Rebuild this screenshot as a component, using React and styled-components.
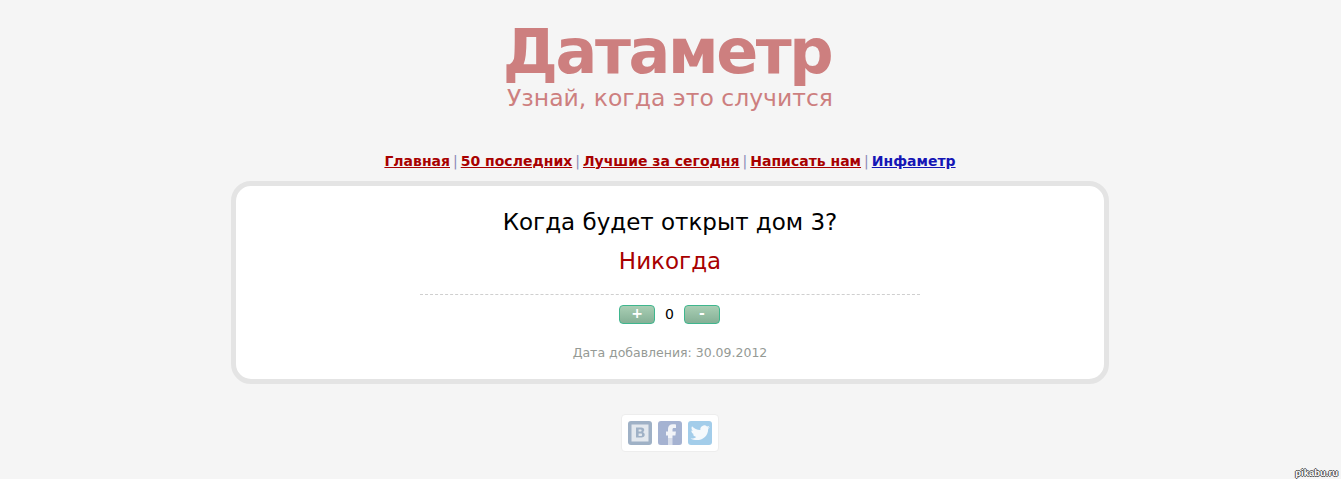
import React from "react";
import styled, { createGlobalStyle } from "styled-components";

const Global = createGlobalStyle`
  html, body {
    margin: 0;
    padding: 0;
    height: 100%;
    background: #f5f5f5;
    font-family: "DejaVu Sans", Verdana, sans-serif;
  }
`;

const Page = styled.div`
  position: relative;
  height: 479px;
  padding-right: 1px;
  overflow: hidden;
  display: flex;
  flex-direction: column;
  align-items: center;
`;

const Header = styled.header`
  display: flex;
  flex-direction: column;
  align-items: center;
  color: #cd7f7f;
  padding-top: 20px;
`;

const Title = styled.h1`
  margin: 0;
  padding-right: 6px;
  font-size: 62px;
  line-height: 64px;
  letter-spacing: -2.4px;
  font-weight: 700;
`;

const Slogan = styled.div`
  font-size: 23.5px;
  line-height: 28px;
`;

const Menu = styled.nav`
  margin-top: 39px;
  height: 20px;
  display: flex;
  align-items: center;
  font-size: 14px;
  color: #8a8ab8;
`;

const MenuLink = styled.a`
  color: ${(p) => (p.$blue ? "#1515b5" : "#a80000")};
  font-weight: 700;
  text-decoration: underline;
`;

const Sep = styled.span`
  margin: 0 3px;
`;

const Card = styled.main`
  box-sizing: border-box;
  width: 878px;
  height: 203px;
  margin-top: 10px;
  background: #fff;
  border: 5px solid #e4e4e4;
  border-radius: 20px;
  display: flex;
  flex-direction: column;
  align-items: center;
  padding-top: 21px;
`;

const Question = styled.div`
  font-size: 23px;
  line-height: 30px;
  color: #000;
`;

const Answer = styled.div`
  margin-top: 9px;
  font-size: 23px;
  line-height: 30px;
  color: #a80000;
`;

const Divider = styled.div`
  width: 500px;
  margin-top: 18px;
  border-top: 1px dashed #cfcfcf;
`;

const Votes = styled.div`
  margin-top: 10px;
  margin-right: 1px;
  display: flex;
  align-items: center;
  gap: 10px;
  font-size: 14px;
  line-height: 17px;
  color: #000;
`;

const VoteButton = styled.button`
  box-sizing: border-box;
  width: 36px;
  height: 19px;
  padding: 0 0 2px;
  border: 1px solid #3fb68e;
  border-radius: 4px;
  background: linear-gradient(#a9ceb4, #85b096);
  color: #fff;
  font-family: inherit;
  font-size: 14px;
  font-weight: 700;
  line-height: 15px;
`;

const Count = styled.span`
  width: 9px;
  margin-top: -1px;
  text-align: center;
`;

const Added = styled.div`
  margin-top: 21px;
  font-size: 12.5px;
  line-height: 16px;
  color: #959a95;
`;

const Social = styled.div`
  box-sizing: border-box;
  margin-top: 30px;
  height: 38px;
  padding: 6px;
  display: flex;
  gap: 6px;
  background: #fff;
  border: 1px solid #ededed;
  border-radius: 4px;
`;

const SocialIcon = styled.svg`
  display: block;
  width: 24px;
  height: 24px;
`;

const Watermark = styled.span`
  position: absolute;
  right: 3px;
  bottom: 1px;
  font-family: "Liberation Sans", Arial, sans-serif;
  font-size: 9.5px;
  font-weight: 700;
  color: #fff;
  text-shadow: -1px 0 #555, 1px 0 #555, 0 -1px #555, 0 1px #555;
`;

const links = [
  { label: "Главная" },
  { label: "50 последних" },
  { label: "Лучшие за сегодня" },
  { label: "Написать нам" },
  { label: "Инфаметр", blue: true },
];

function Vk() {
  return (
    <SocialIcon viewBox="0 0 24 24">
      <rect width="24" height="24" rx="3" fill="#9fb1c6" />
      <rect x="3.5" y="3.5" width="17" height="17" fill="#e3e8ee" />
      <path
        d="M8 6.5h5.2c2 0 3 1 3 2.5 0 1-.5 1.8-1.4 2.2 1.2.3 1.9 1.2 1.9 2.5 0 1.8-1.3 2.8-3.4 2.8H8zm2.6 2v2h2c.6 0 1-.4 1-1s-.4-1-1-1zm0 4v2.500h2.300c.8 0 1.200-.5 1.200-1.250s-.4-1.250-1.200-1.250z"
        fill="#9fb1c6"
        fillRule="evenodd"
      />
    </SocialIcon>
  );
}

function Fb() {
  return (
    <SocialIcon viewBox="0 0 24 24">
      <rect width="24" height="24" rx="3" fill="#a5b3d2" />
      <path
        d="M10 24V14.500H8v-4h2V8c0-3 1.800-4.800 4.800-4.800 1.300 0 2.500.1 3.200.2v3.600h-2c-1.200 0-1.500.6-1.500 1.500v1.900h3.400l-.5 4h-2.900V24z"
        fill="#f2f4f8"
      />
      <rect y="17" width="24" height="7" rx="2" fill="#a5b3d2" opacity="0.35" />
    </SocialIcon>
  );
}

function Tw() {
  return (
    <SocialIcon viewBox="0 0 24 24">
      <rect width="24" height="24" rx="3" fill="#a3cdea" />
      <path
        d="M22 6.200c-.8.300-1.500.4-2.300.5.800-.5 1.400-1.200 1.700-2-.8.400-1.600.7-2.400.9a3.900 3.900 0 0 0-6.600 3.500C9 9 6 7.500 4 5.200c-.9 1.500-.6 3.500.9 4.800-.6 0-1.100-.2-1.600-.4 0 1.800 1.200 3.300 3 3.700-.5.100-1 .1-1.500 0 .5 1.500 1.900 2.500 3.400 2.600-1.600 1.200-3.500 1.800-5.700 1.500 6.200 3.800 17.700 1.600 17.700-9.600.7-.4 1.300-1 1.800-1.600z"
        fill="#f5f9fc"
      />
    </SocialIcon>
  );
}

export default function App() {
  return (
    <Page>
      <Global />
      <Header>
        <Title>Датаметр</Title>
        <Slogan>Узнай, когда это случится</Slogan>
      </Header>
      <Menu>
        {links.map((link, i) => (
          <React.Fragment key={link.label}>
            {i > 0 && <Sep>|</Sep>}
            <MenuLink href="#" $blue={link.blue}>
              {link.label}
            </MenuLink>
          </React.Fragment>
        ))}
      </Menu>
      <Card>
        <Question>Когда будет открыт дом 3?</Question>
        <Answer>Никогда</Answer>
        <Divider />
        <Votes>
          <VoteButton>+</VoteButton>
          <Count>0</Count>
          <VoteButton>-</VoteButton>
        </Votes>
        <Added>Дата добавления: 30.09.2012</Added>
      </Card>
      <Social>
        <Vk />
        <Fb />
        <Tw />
      </Social>
      <Watermark>pikabu.ru</Watermark>
    </Page>
  );
}
